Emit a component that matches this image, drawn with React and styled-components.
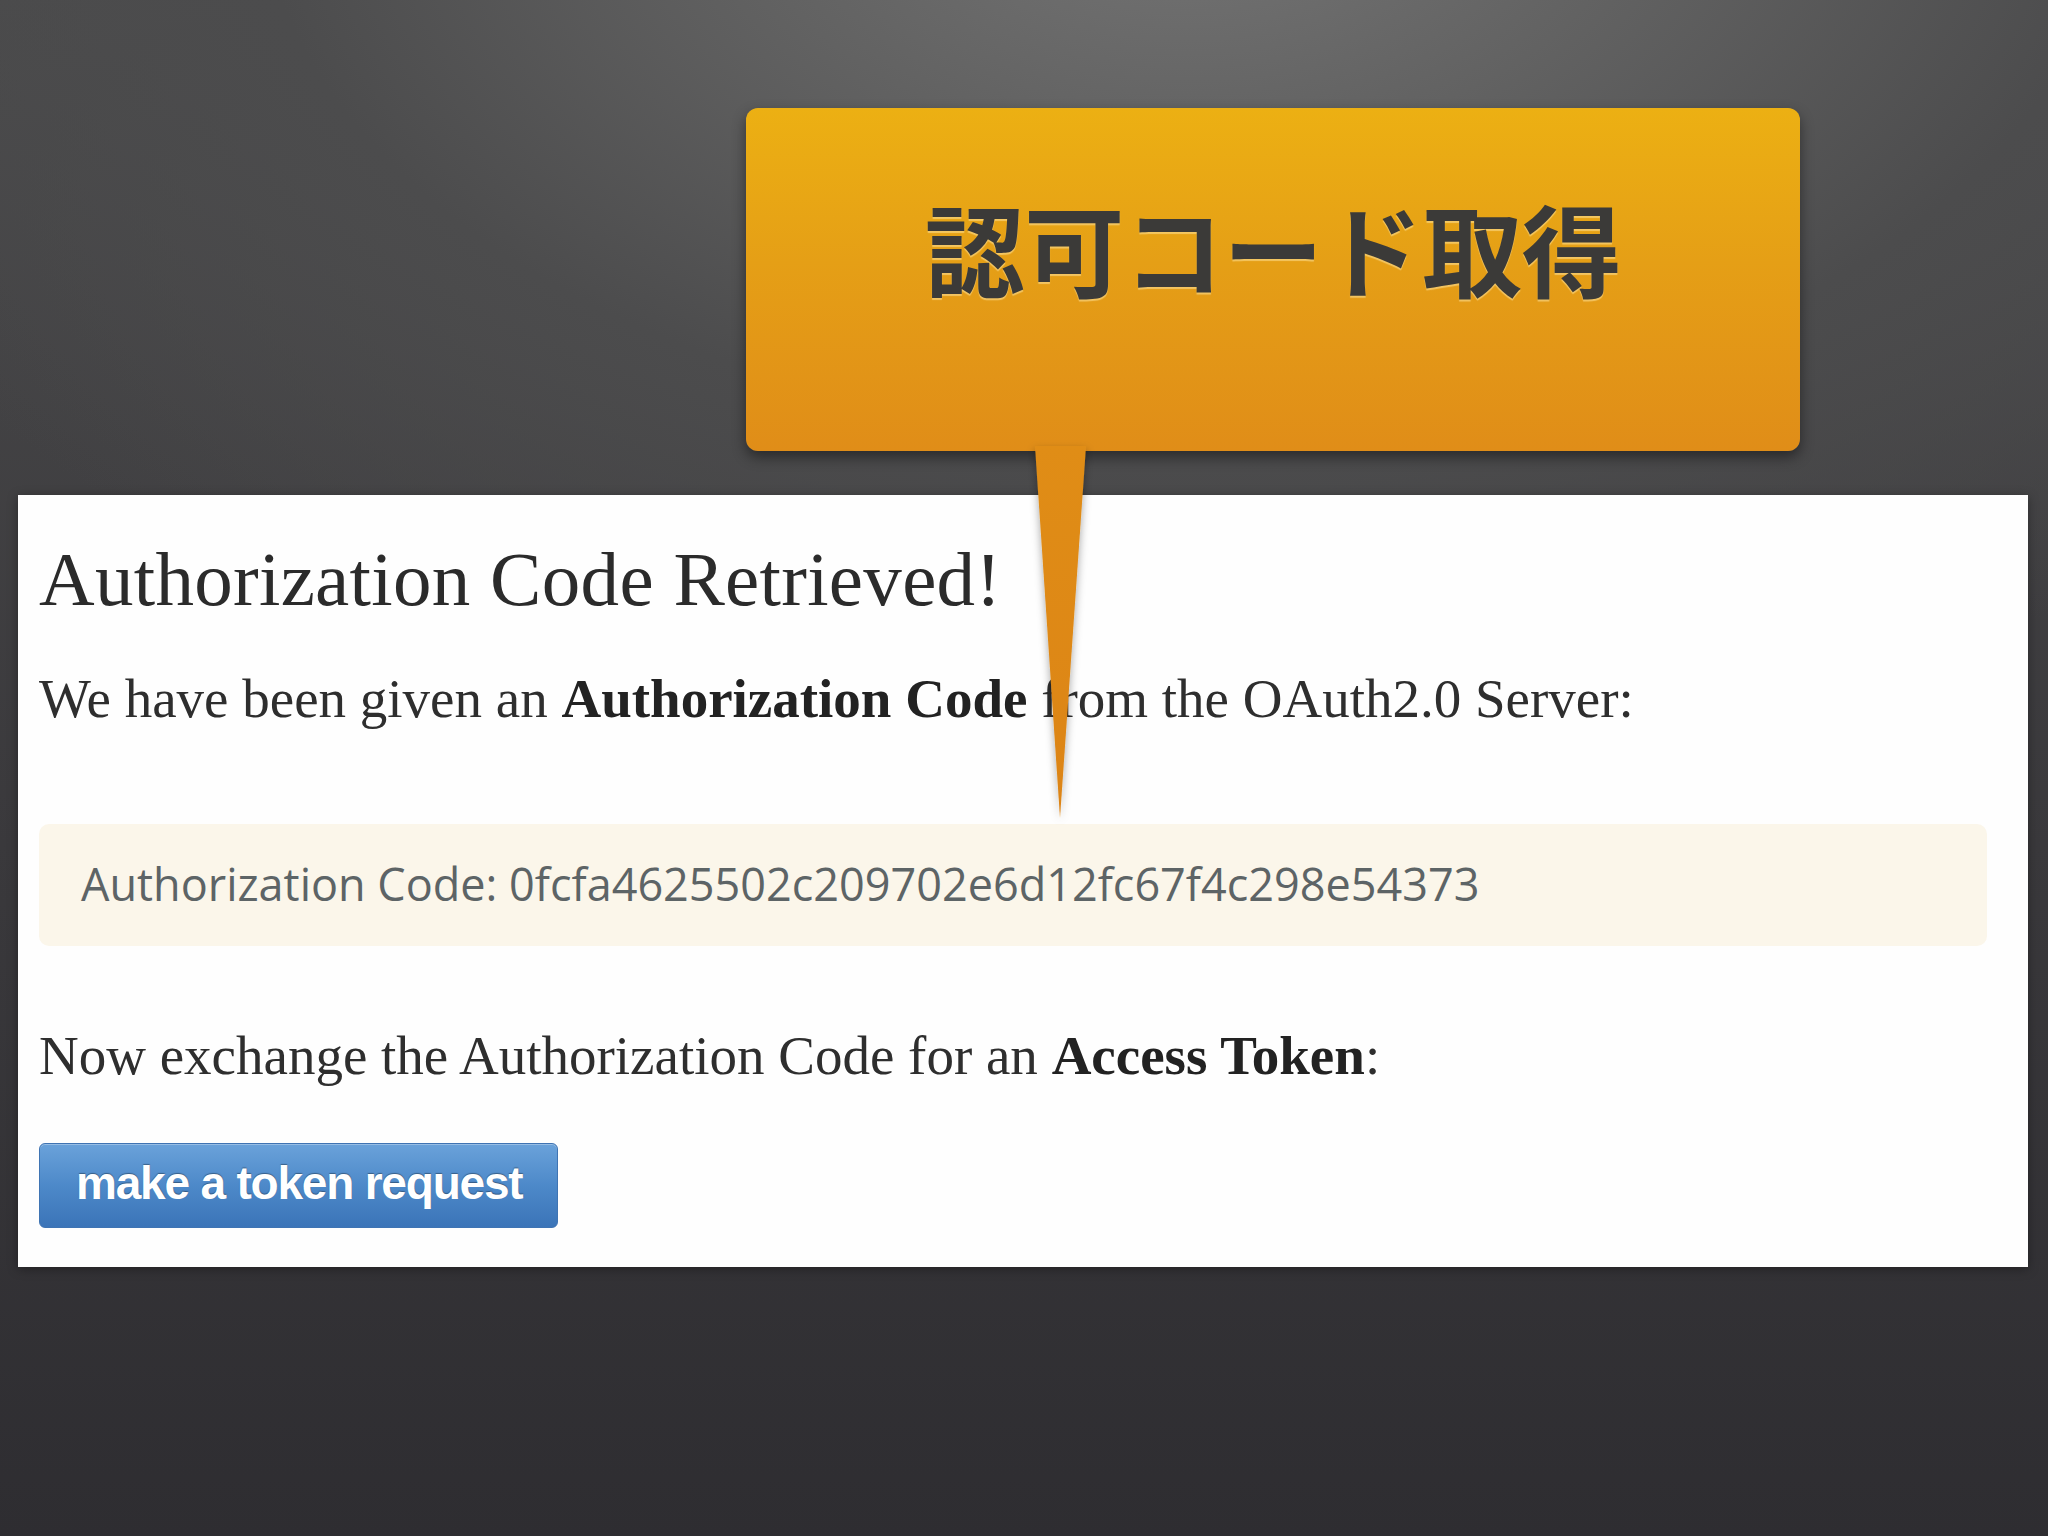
import styled, { createGlobalStyle } from 'styled-components';

const GlobalStyle = createGlobalStyle`
  html, body {
    margin: 0;
    padding: 0;
  }
  body {
    width: 2048px;
    height: 1536px;
    overflow: hidden;
  }
`;

// Fondo oscuro con luz arriba al centro
const Stage = styled.div`
  position: relative;
  width: 2048px;
  height: 1536px;
  box-sizing: border-box;
  padding: 495px 20px 0 18px;
  background:
    radial-gradient(ellipse 1500px 900px at 58% -8%, #767676 0%, #626262 30%, #4c4c4d 62%, rgba(60, 59, 62, 0) 100%),
    linear-gradient(180deg, #4a4a4b 0%, #3a393c 55%, #2e2d31 100%);
`;

// Panel blanco con la página capturada
const Panel = styled.section`
  width: 2010px;
  height: 772px;
  box-sizing: border-box;
  background: #fefefe;
  padding: 42px 21px 0 21px;
  box-shadow: 0 2px 10px rgba(0, 0, 0, 0.35);
  display: flex;
  flex-direction: column;
  align-items: flex-start;
`;

const Heading = styled.h1`
  margin: 0;
  font-family: 'Liberation Serif', 'DejaVu Serif', serif;
  font-weight: 400;
  font-size: 77px;
  line-height: 84px;
  color: #2b2b2b;
  letter-spacing: 0.3px;
`;

const Text = styled.p`
  margin: ${(p) => p.$top}px 0 0 0;
  font-family: 'Liberation Serif', 'DejaVu Serif', serif;
  font-size: 55px;
  line-height: 60px;
  color: #2e2e2e;

  b {
    font-weight: 700;
    color: #222;
  }
`;

const CodeBox = styled.div`
  margin-top: 95px;
  width: 1948px;
  height: 122px;
  box-sizing: border-box;
  padding: 0 0 4px 42px;
  display: flex;
  align-items: center;
  border-radius: 10px;
  background: #fbf6ea;
  font-family: 'Open Sans', 'Noto Sans', sans-serif;
  font-size: 45px;
  color: #5d6466;
`;

const Button = styled.button`
  margin-top: 57px;
  width: 519px;
  height: 85px;
  border: 1px solid #3f74b3;
  border-radius: 6px;
  background: linear-gradient(180deg, #6aa2da 0%, #4d89c9 50%, #3b74b8 100%);
  color: #ffffff;
  font-family: 'Liberation Sans', Arial, sans-serif;
  font-weight: 700;
  font-size: 46px;
  letter-spacing: -1.2px;
  text-align: left;
  padding: 0 0 6px 36px;
  text-shadow: 0 -1px 1px rgba(0, 0, 0, 0.35);
  box-shadow: inset 0 1px 0 rgba(255, 255, 255, 0.3);
`;

// Globo naranja superpuesto
const Callout = styled.div`
  position: absolute;
  left: 746px;
  top: 108px;
  width: 1054px;
  height: 343px;
  border-radius: 12px;
  background: linear-gradient(180deg, #ecb013 0%, #e59f16 45%, #e08d18 100%);
  box-shadow: 0 6px 14px rgba(0, 0, 0, 0.45);
  display: flex;
  justify-content: center;
  padding-top: 79px;
  box-sizing: border-box;
`;

const CalloutText = styled.div`
  font-family: 'Noto Sans CJK JP', 'Noto Sans', sans-serif;
  font-weight: 700;
  font-size: 100px;
  line-height: 120px;
  color: #3b3a38;
  letter-spacing: -0.5px;
  text-shadow: 0 2px 1px rgba(255, 230, 160, 0.55);
  height: 120px;
`;

const Pointer = styled.svg`
  position: absolute;
  left: 1030px;
  top: 446px;
  overflow: visible;
`;

const App = () => {
  return (
    <Stage>
      <GlobalStyle />
      <Panel>
        <Heading>Authorization Code Retrieved!</Heading>
        <Text $top={48}>
          We have been given an <b>Authorization Code</b> from the OAuth2.0 Server:
        </Text>
        <CodeBox>Authorization Code: 0fcfa4625502c209702e6d12fc67f4c298e54373</CodeBox>
        <Text $top={80}>
          Now exchange the Authorization Code for an <b>Access Token</b>:
        </Text>
        <Button>make a token request</Button>
      </Panel>
      <Callout>
        <CalloutText>認可コード取得</CalloutText>
      </Callout>
      <Pointer width="64" height="380" viewBox="0 0 64 380">
        <defs>
          <linearGradient id="ptr" x1="0" y1="0" x2="0" y2="1">
            <stop offset="0" stopColor="#e08d18" />
            <stop offset="1" stopColor="#dc8417" />
          </linearGradient>
          <filter id="ptrShadow" x="-50%" y="-10%" width="200%" height="130%">
            <feDropShadow dx="0" dy="4" stdDeviation="4" floodColor="#000" floodOpacity="0.35" />
          </filter>
        </defs>
        <polygon points="5,0 56,0 30,372" fill="url(#ptr)" filter="url(#ptrShadow)" />
      </Pointer>
    </Stage>
  );
};

export default App;
